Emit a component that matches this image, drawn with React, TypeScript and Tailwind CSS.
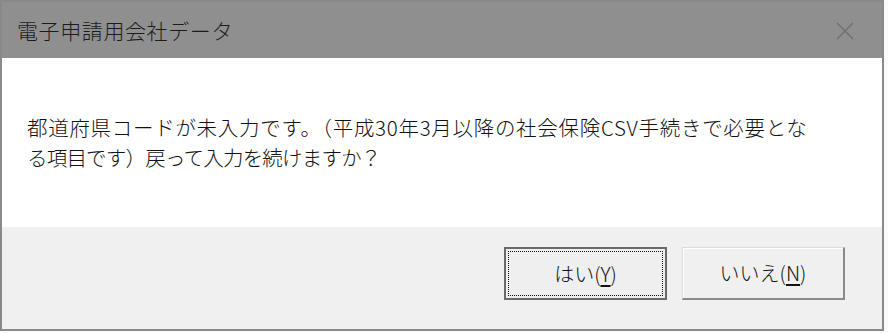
import React from "react";

const font = { fontFamily: '"Noto Sans CJK JP", "Liberation Sans", sans-serif' };

export default function App() {
  return (
    <div className="w-[888px] h-[333px] bg-[#fafafa]" style={font}>
      <div className="w-[884px] h-[331px] border-2 border-[#898989] flex flex-col">
        {/* Title bar */}
        <div className="h-[56px] bg-[#8f8f8f] flex items-center justify-between pl-[15px] pr-[28px]">
          <span className="text-[21px] text-[#1b1b1b] leading-none tracking-[0.6px] font-light">
            電子申請用会社データ
          </span>
          <svg width="18" height="18" viewBox="0 0 18 18" className="mt-[2px]">
            <path d="M1 1 L17 17 M17 1 L1 17" stroke="#6e6e6e" strokeWidth="1.3" fill="none" />
          </svg>
        </div>

        {/* Message */}
        <div className="h-[169px] bg-white flex items-center pl-[25px] pb-[2px]">
          <p className="text-[20.5px] leading-[30px] text-[#111] font-light">
            <span className="block tracking-[0.7px]">
              都道府県コードが未入力です。（平成30年3月以降の社会保険CSV手続きで必要とな
            </span>
            <span className="block tracking-[-0.8px]">
              る項目です）戻って入力を続けますか？
            </span>
          </p>
        </div>

        {/* Buttons */}
        <div className="flex-1 bg-[#f0f0f0] flex justify-end items-start pt-[20px] pr-[37px] gap-[15px]">
          <button className="w-[163px] h-[53px] border-2 border-[#6a6a6a] bg-[#efefef] p-[2px]">
            <span className="w-full h-full flex items-center justify-center border border-dotted border-[#111] text-[20px] text-[#111] font-light">
              はい(<span className="underline underline-offset-[3px]">Y</span>)
            </span>
          </button>
          <button className="w-[163px] h-[53px] bg-[#f0f0f0] border border-[#dcdcdc] border-r-2 border-b-2 border-r-[#8a8a8a] border-b-[#8a8a8a] shadow-[inset_1px_1px_0_#ffffff] flex items-center justify-center text-[20px] text-[#111] font-light">
            いいえ(<span className="underline underline-offset-[3px]">N</span>)
          </button>
        </div>
      </div>
    </div>
  );
}
